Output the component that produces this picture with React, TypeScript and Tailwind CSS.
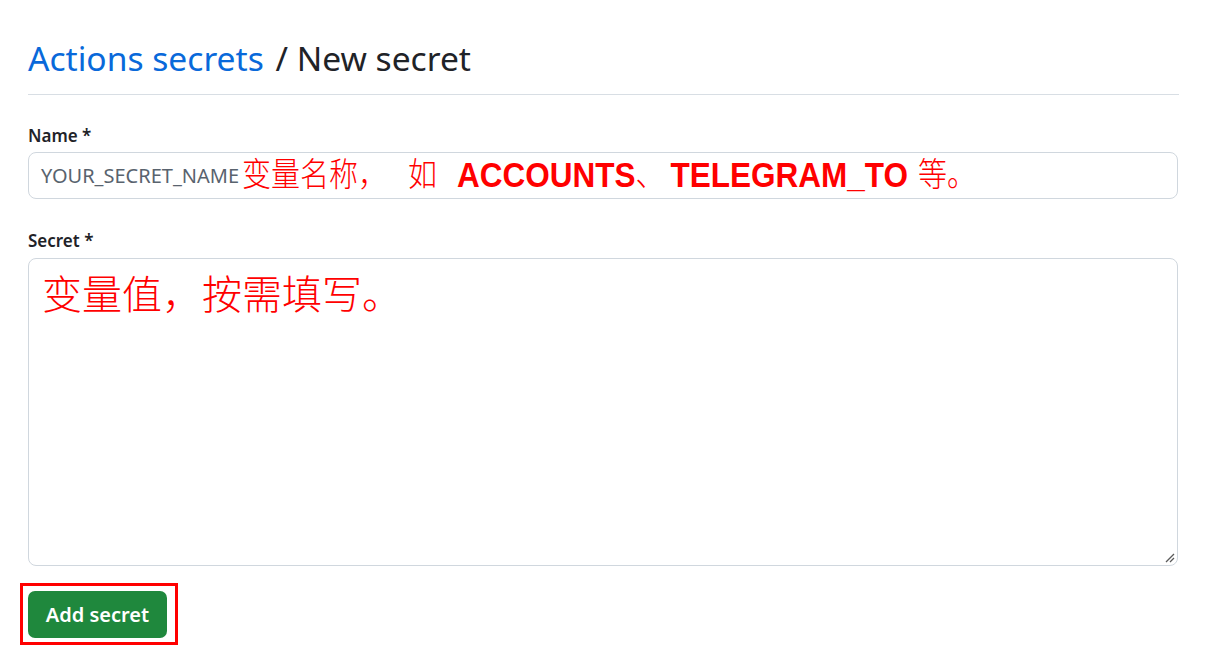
const cjk = "font-['Liberation_Serif','Noto_Sans_CJK_SC',serif] font-light";
const latinBold = "font-['Liberation_Sans',sans-serif] font-bold text-[31.5px]";

export default function App() {
  return (
    <div className="min-h-screen bg-white font-['Noto_Sans','Open_Sans',sans-serif] text-[#1f2328]">
      <div className="ml-[28px] w-[1151px] pt-[36px]">
        <h2 className="border-b border-[#d8dee4] pb-[14px] text-[33.6px] leading-[44px]">
          <span className="text-[#0969da]">Actions secrets</span>
          <span className="ml-[3px]"> / New secret</span>
        </h2>

        <label className="mt-[26px] block text-[17px] font-semibold leading-[30px]">Name *</label>
        <div className="mt-[1px] flex h-[47px] w-[1150px] items-center whitespace-nowrap rounded-[8px] border border-[#d0d7de] pl-[12px] text-[#ff0000]">
          <span className="text-[20px] text-[#59636e]">YOUR_SECRET_NAME</span>
          <span className="ml-[3px] inline-flex scale-y-[1.12] items-center">
            <span className={`text-[29px] ${cjk}`}>变量名称，</span>
            <span className={`ml-[21px] text-[29px] ${cjk}`}>如</span>
            <span className={`ml-[20px] ${latinBold}`}>ACCOUNTS</span>
            <span className={`text-[29px] ${cjk}`}>、</span>
            <span className={`ml-[6px] ${latinBold}`}>TELEGRAM_TO</span>
            <span className={`ml-[10px] text-[29px] ${cjk}`}>等。</span>
          </span>
        </div>

        <label className="mt-[27px] block text-[17px] font-semibold leading-[30px]">Secret *</label>
        <div className="relative mt-[2px] h-[308px] w-[1150px] rounded-[8px] border border-[#d0d7de] px-[13px] pt-[13px]">
          <span className={`text-[40px] leading-[48px] text-[#ff0000] ${cjk}`}>变量值，按需填写。</span>
          <svg className="absolute bottom-[2px] right-[2px]" width="10" height="10" viewBox="0 0 10 10">
            <path d="M1 9 L9 1 M5 9 L9 5" stroke="#5a5a5a" strokeWidth="1.3" />
          </svg>
        </div>

        <div className="mt-[17px] ml-[-8px] inline-block border-[3px] border-[#ff0000] pb-[4px] pl-[5px] pr-[8px] pt-[5px]">
          <button className="block h-[47px] w-[139px] rounded-[7px] bg-[#1f883d] text-[20px] font-semibold text-white">
            Add secret
          </button>
        </div>
      </div>
    </div>
  );
}
